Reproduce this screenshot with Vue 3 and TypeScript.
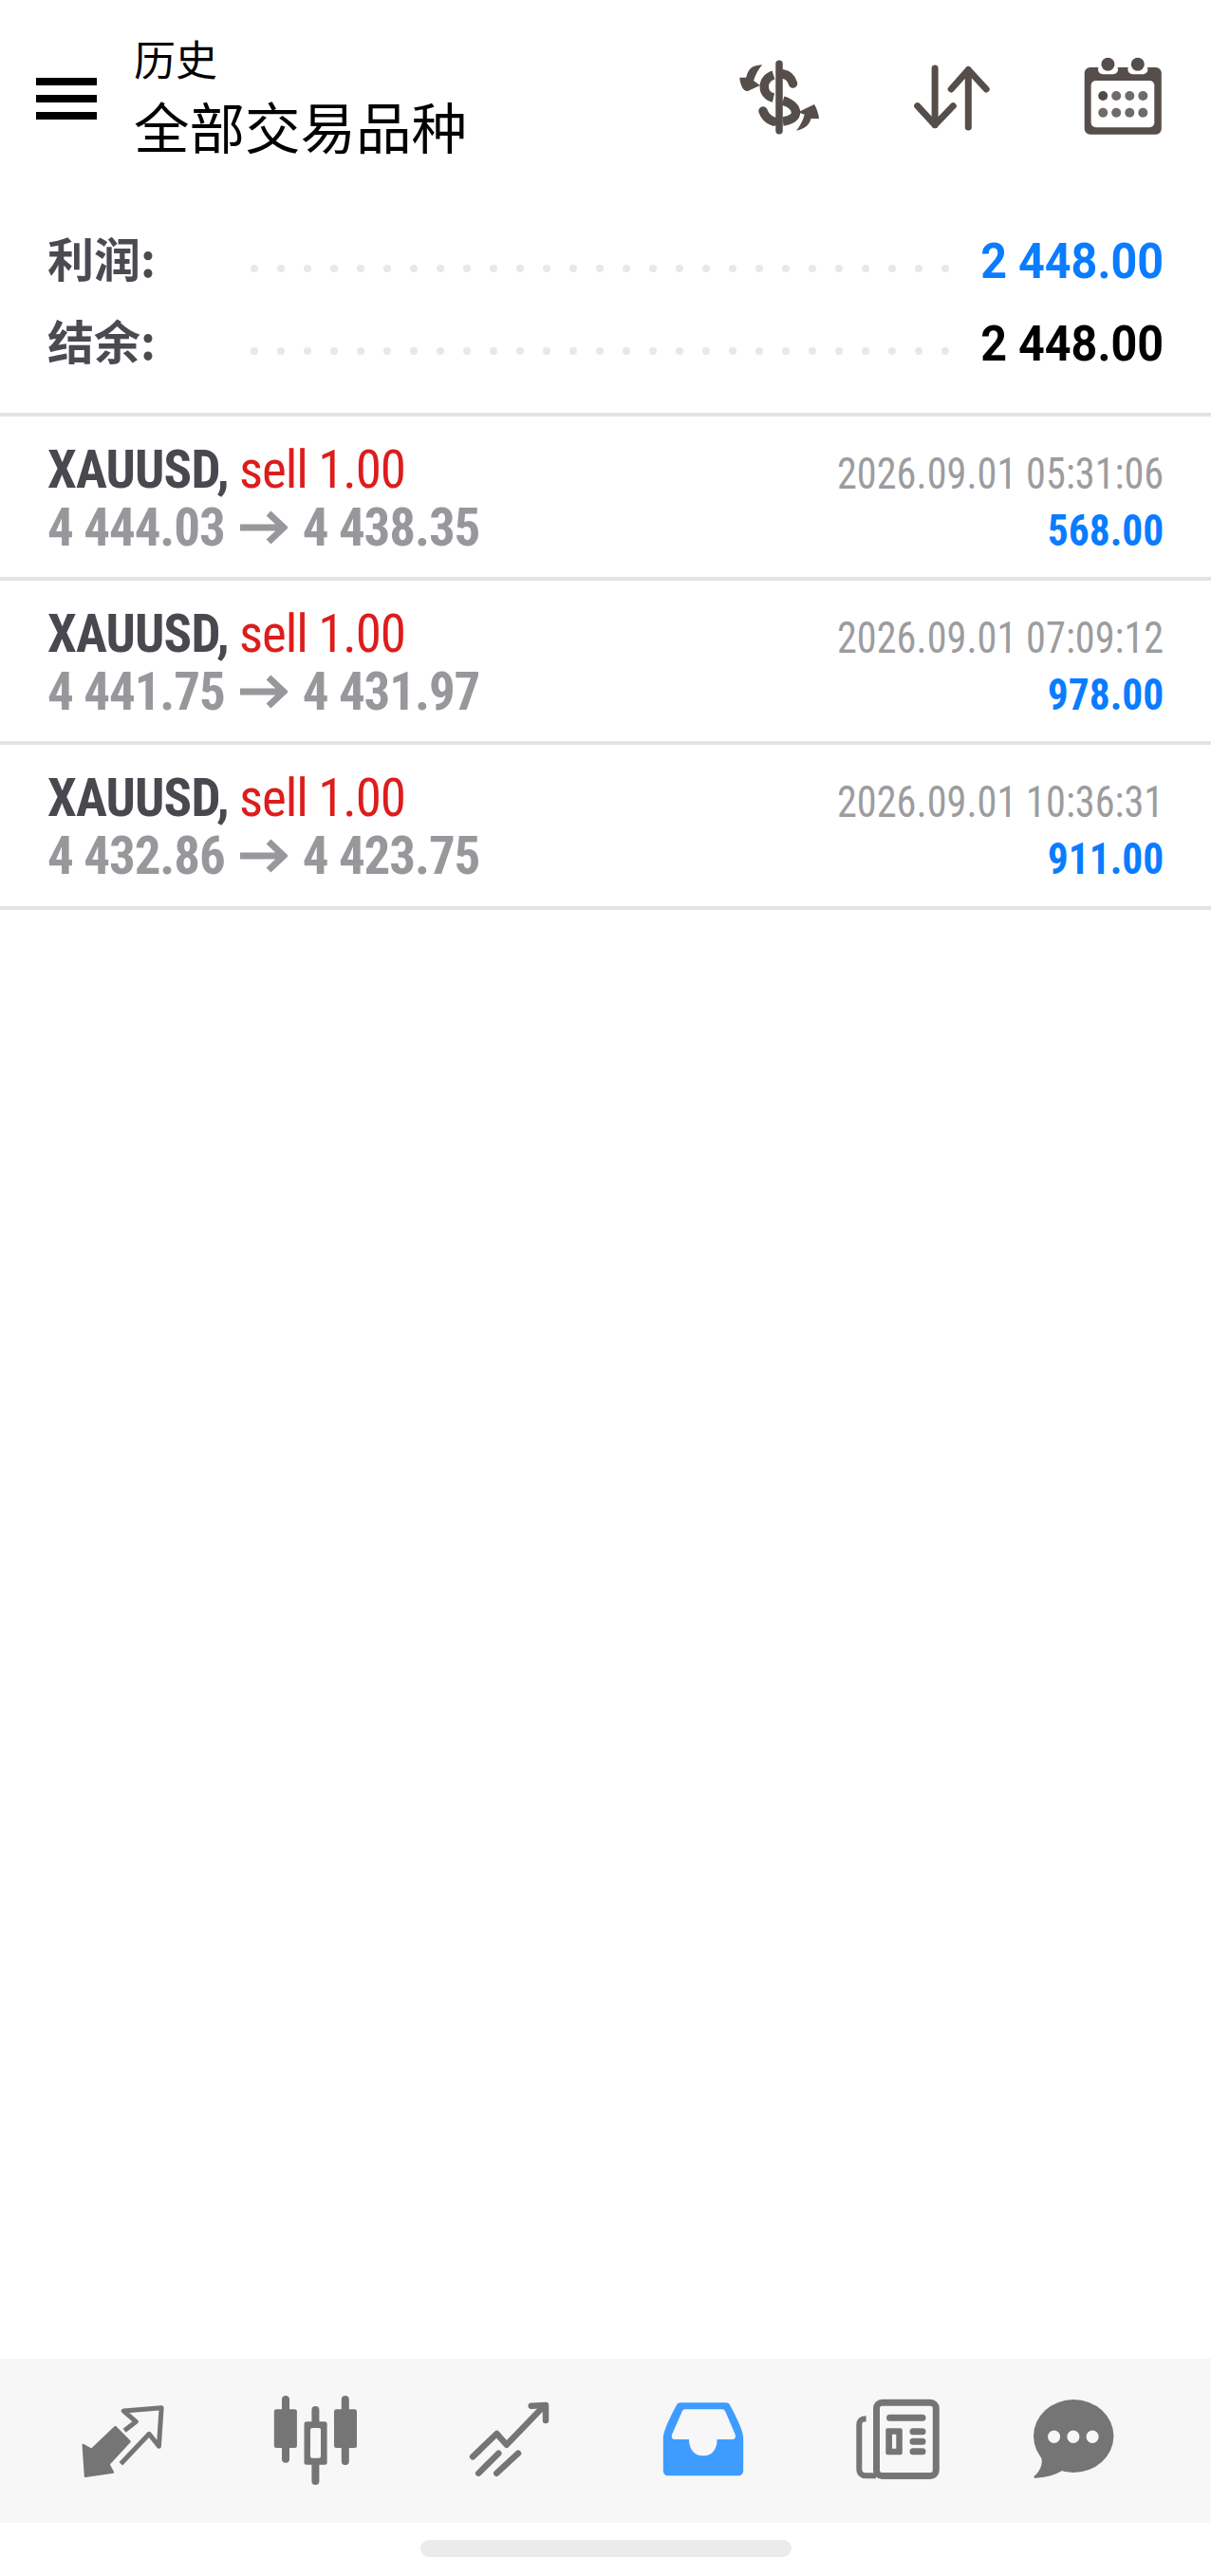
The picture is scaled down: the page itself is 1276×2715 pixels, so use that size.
<script setup lang="ts">
interface Deal {
  open: string
  close: string
  time: string
  profit: string
}

const deals: Deal[] = [
  { open: '4 444.03', close: '4 438.35', time: '2026.09.01 05:31:06', profit: '568.00' },
  { open: '4 441.75', close: '4 431.97', time: '2026.09.01 07:09:12', profit: '978.00' },
  { open: '4 432.86', close: '4 423.75', time: '2026.09.01 10:36:31', profit: '911.00' }
]

const summary = [
  { label: '利润:', value: '2 448.00', tone: 'blue' },
  { label: '结余:', value: '2 448.00', tone: 'black' }
]

const dotCount = 27
const calendarDots = [29.2, 43.2, 57.3, 71.3]
</script>

<template>
  <div class="page">
    <header class="header">
      <div class="burger"><i></i><i></i><i></i></div>
      <div class="title">
        <div class="title-small">历史</div>
        <div class="title-big">全部交易品种</div>
      </div>
      <div class="actions">
        <svg class="icon" viewBox="0 0 100 100" fill="#554e4a">
          <path d="M50 17.3V87.7" stroke="#554e4a" stroke-width="7.5" stroke-linecap="round" />
          <g fill="none" stroke="#554e4a" stroke-width="9.5">
            <path d="M44 29C31 33 31 50 44 53" />
            <path d="M54 28C60 29 63 33 64.5 38" stroke-linecap="round" />
            <path d="M54 56C72 62 72 76 54 78" />
            <path d="M33 67C35 73 38 76 44 78" stroke-linecap="round" />
          </g>
          <path d="M32.2 18.3C26 19 22 20 20.3 21.7C17.5 24 16 28 15.2 31.7L8.3 31.7C8.5 36 10 40 11.7 43.3C13 45 15 46.5 16.9 46L29.9 40L23 35C25 29 28 23 32.2 18.3Z" />
          <path d="M68 87.7C72 87 75.5 85.5 78.4 83.3C81 81 82.8 78 83.5 75L92 75C91.5 70 89.5 64 87 60L69.9 68.3L76.7 70.7C75 77 72 83 68 87.7Z" />
        </svg>
        <svg class="icon" viewBox="0 0 100 100" fill="none" stroke="#554e4a" stroke-width="7" stroke-linecap="round" stroke-linejoin="round">
          <path d="M32.1 22V81.7M13.7 61.7L32.1 81.7L51.3 61.7" />
          <path d="M67.3 84V23.5M49.2 44L67.3 23.5L86.2 44" />
        </svg>
        <svg class="icon" viewBox="0 0 100 100">
          <rect x="9.7" y="21" width="81.1" height="70.7" rx="6" fill="#554e4a" />
          <rect x="16.6" y="35" width="66.7" height="49.3" rx="5" fill="#fff" />
          <rect x="24" y="18" width="21" height="10.3" rx="5" fill="#fff" />
          <rect x="55.4" y="18" width="21" height="10.3" rx="5" fill="#fff" />
          <circle cx="34.4" cy="17.7" r="7" fill="#554e4a" />
          <circle cx="65.8" cy="17.7" r="7" fill="#554e4a" />
          <circle
            v-for="(x, i) in calendarDots"
            :key="'a' + i"
            :cx="x"
            cy="51"
            r="5"
            :fill="i === 0 ? '#4f4a47' : '#706b68'"
          />
          <circle v-for="(x, i) in calendarDots" :key="'b' + i" :cx="x" cy="68.7" r="5" fill="#706b68" />
        </svg>
      </div>
    </header>

    <section class="summary">
      <div v-for="row in summary" :key="row.label" class="summary-row">
        <span class="summary-label">{{ row.label }}</span>
        <span class="dots"><i v-for="n in dotCount" :key="n"></i></span>
        <span :class="['summary-value', row.tone]">{{ row.value }}</span>
      </div>
    </section>

    <main class="deals">
      <div v-for="deal in deals" :key="deal.time" class="deal">
        <div class="deal-left">
          <div class="line line-top">
            <span class="symbol">XAUUSD,</span> <span class="side">sell 1.00</span>
          </div>
          <div class="line price">
            <span>{{ deal.open }}</span>
            <svg class="arrow" viewBox="0 0 50 36" fill="none" stroke="#97989b" stroke-width="7">
              <path d="M0 18H44M30 3L46 18L30 33" />
            </svg>
            <span>{{ deal.close }}</span>
          </div>
        </div>
        <div class="deal-right">
          <div class="line time">{{ deal.time }}</div>
          <div class="line profit">{{ deal.profit }}</div>
        </div>
      </div>
    </main>

    <nav class="tabs">
      <svg class="tab" viewBox="0 0 100 100">
        <path d="M42.5 37.7L57.8 53.3L35.6 77.3L40.2 85.7L10.8 90L8.5 56.7L17.3 61.7Z" fill="#757575" stroke="#757575" stroke-width="2" stroke-linejoin="round" />
        <path d="M52.1 41.7L64.3 32.3L51.3 21L91.1 17.7L88.4 58.3L78.1 45.3L48.3 76.7" fill="none" stroke="#757575" stroke-width="5" stroke-linejoin="round" />
      </svg>
      <svg class="tab" viewBox="0 0 100 100" fill="#757575">
        <path d="M18 9V71.7M49.4 20V95M80.8 9V74" stroke="#757575" stroke-width="8" stroke-linecap="round" />
        <rect x="5.8" y="19.3" width="24.1" height="40.7" rx="2.5" />
        <rect x="69" y="19.3" width="24" height="40.7" rx="2.5" />
        <rect x="37.5" y="32.3" width="24.1" height="45.4" rx="2.5" />
        <rect x="44" y="39" width="11" height="31.7" rx="2" fill="#f7f7f7" />
      </svg>
      <svg class="tab" viewBox="0 0 100 100" fill="none" stroke="#757575" stroke-width="6.5" stroke-linecap="round" stroke-linejoin="round">
        <path d="M11.1 69.3L36.4 45L46.7 56.7L86.5 15.5" />
        <path d="M72.7 15.7L88 15V31" />
        <path d="M17.2 86.7L38.3 65.7M36.3 86.7L59 65.7" />
      </svg>
      <svg class="tab" viewBox="0 0 100 100">
        <path
          fill="#3f9cff"
          fill-rule="evenodd"
          d="M26 12.3H74C76 12.3 77.5 13.5 78.5 15.5C86 30 92.2 42 92.2 50V84C92.2 87 90 89.3 87 89.3H13C10 89.3 7.8 87 7.8 84V50C7.8 42 14 30 21.5 15.5C22.5 13.5 24 12.3 26 12.3ZM31 19.3C29 19.3 28 20.5 27.3 22.5L17 46C16.2 49 17.5 51 20 51H35C35 62 41 68.3 50 68.3C59 68.3 64.6 62 64.6 51H81C83.5 51 84.5 49 83.7 46L73.7 22.5C73 20.5 71.5 19.3 69.5 19.3Z"
        />
      </svg>
      <svg class="tab" viewBox="0 0 100 100">
        <rect x="28.5" y="12.3" width="62.8" height="77.2" rx="6" fill="none" stroke="#757575" stroke-width="7" />
        <path d="M17.6 29.3C13 29.3 10.3 31 10.3 36V82C10.3 87 13 89.3 17 89.3H28" fill="none" stroke="#757575" stroke-width="6" />
        <path d="M42.5 28.3H77M67 42.7H77M67 53.3H77M67 63.7H77" stroke="#757575" stroke-width="7" stroke-linecap="round" />
        <path fill="#757575" fill-rule="evenodd" d="M40.3 39.3H53.8C55 39.3 55.8 40 55.8 41.3V65.3C55.8 66.5 55 67.3 53.8 67.3H40.3C39 67.3 38.3 66.5 38.3 65.3V41.3C38.3 40 39 39.3 40.3 39.3ZM45 45.7V60.7H49.3V45.7Z" />
      </svg>
      <svg class="tab" viewBox="0 0 100 100">
        <ellipse cx="50.2" cy="47.5" rx="42.2" ry="38.5" fill="#757575" />
        <path d="M15 68C18 72 18 82 8.5 90C8 91.5 9 92 11 91.7C20 91 30 89 38 84Z" fill="#757575" />
        <ellipse cx="29.6" cy="48.3" rx="6.5" ry="6.7" fill="#f7f7f7" />
        <ellipse cx="49.9" cy="48.3" rx="6.5" ry="6.7" fill="#f7f7f7" />
        <ellipse cx="70.1" cy="48.3" rx="6.5" ry="6.7" fill="#f7f7f7" />
      </svg>
    </nav>
    <footer class="home-bar"><i></i></footer>
  </div>
</template>

<style scoped>
.page {
  display: flex;
  flex-direction: column;
  height: 2715px;
  background: #fff;
  font-family: Roboto, "Noto Sans CJK SC", sans-serif;
  overflow: hidden;
}

.header {
  display: flex;
  height: 232px;
  flex-shrink: 0;
}

.burger {
  display: flex;
  flex-direction: column;
  gap: 10px;
  width: 64px;
  margin: 82px 39px 0 38px;
}

.burger i {
  display: block;
  height: 8px;
  background: #000;
}

.title {
  padding-top: 34px;
  color: #000;
  font-family: "Noto Sans CJK SC", sans-serif;
}

.title-small {
  font-size: 44px;
  line-height: 54px;
}

.title-big {
  margin-top: 8px;
  font-size: 58.5px;
  line-height: 72px;
}

.actions {
  display: flex;
  gap: 82px;
  margin-left: auto;
  padding: 50px 43px 0 0;
}

.icon {
  width: 100px;
  height: 100px;
}

.actions .icon + .icon + .icon {
  margin-left: -2px;
}

.summary {
  padding: 0 50px 29px;
  border-bottom: 4px solid #e3e3e3;
  flex-shrink: 0;
}

.summary-row {
  display: flex;
  align-items: center;
  height: 87px;
}

.summary-label {
  width: 214px;
  margin-bottom: 10px;
  color: #4a4a50;
  font-family: "Noto Sans CJK SC", sans-serif;
  font-size: 49px;
  font-weight: 700;
}

.dots {
  display: flex;
  gap: 20px;
  margin-top: 14px;
}

.dots i {
  display: block;
  width: 8px;
  height: 8px;
  border-radius: 50%;
  background: #e8e8e8;
}

.summary-value {
  margin-left: auto;
  font-size: 51px;
  line-height: 87px;
  font-weight: 700;
  transform: scaleX(0.95);
  transform-origin: right center;
}

.blue {
  color: #0a7cff;
}

.black {
  color: #000;
}

.deals {
  flex: 1;
}

.deal {
  display: flex;
  justify-content: space-between;
  height: 173.2px;
  box-sizing: border-box;
  padding: 26px 50px 0;
  border-bottom: 4px solid #e3e3e3;
}

.deal-right {
  padding-top: 4px;
  text-align: right;
}

.line {
  height: 60px;
  line-height: 60px;
  white-space: nowrap;
  font-stretch: 75%;
}

.line-top {
  height: 61px;
  font-size: 55px;
}

.symbol {
  color: #48484f;
  font-weight: 700;
  letter-spacing: -0.85px;
}

.side {
  margin-left: -1.5px;
  color: #dd1c1c;
  letter-spacing: -1.1px;
}

.price {
  display: flex;
  align-items: center;
  color: #97989b;
  font-size: 55px;
  font-weight: 700;
  letter-spacing: -1.1px;
}

.arrow {
  width: 50px;
  height: 36px;
  margin: 0 16px;
}

.time {
  color: #9c9c9f;
  font-size: 46px;
  transform: scaleX(0.92);
  transform-origin: right center;
}

.profit {
  color: #0a7cff;
  font-size: 46px;
  font-weight: 700;
  transform: scaleX(0.945);
  transform-origin: right center;
}

.tabs {
  display: grid;
  grid-template-columns: repeat(5, 204px) 168px;
  justify-items: center;
  height: 173px;
  box-sizing: border-box;
  padding: 34px 0 0 27px;
  background: #f7f7f7;
  flex-shrink: 0;
}

.tab {
  width: 100px;
  height: 100px;
}

.home-bar {
  display: flex;
  justify-content: center;
  height: 56px;
  padding-top: 18px;
  box-sizing: border-box;
  flex-shrink: 0;
}

.home-bar i {
  display: block;
  width: 391px;
  height: 18px;
  border-radius: 9px;
  background: #ebebeb;
}
</style>
